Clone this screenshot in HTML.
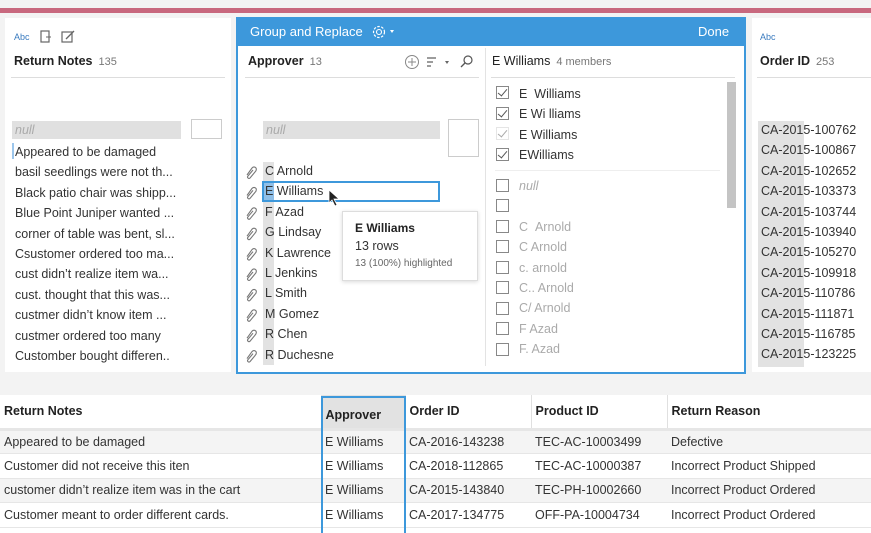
<!DOCTYPE html>
<html><head><style>
*{margin:0;padding:0;box-sizing:border-box}
body{width:871px;height:533px;background:#f3f3f3;font-family:"Liberation Sans",sans-serif;color:#333;position:relative;overflow:hidden;font-size:12.5px}
.a{position:absolute;white-space:nowrap}
.card{position:absolute;background:#fff}
.h{font-weight:bold;font-size:12.5px;color:#222}
.cnt{color:#777;font-weight:normal;font-size:11px;margin-left:6px}
.g{color:#aaa}
.cb{position:absolute;width:13px;height:13px;border:1px solid #888;background:#fff}
.ck::after{content:"";position:absolute;left:3px;top:0px;width:4px;height:8px;border:solid #555;border-width:0 1.3px 1.3px 0;transform:rotate(40deg)}
.hl{background:#e0e0e0}
td{padding:0 4px;height:24.5px;border-bottom:1px solid #e6e6e6;font-size:12.5px;color:#333;white-space:nowrap}
th{padding:0 4px;height:34px;text-align:left;font-size:12.5px;color:#222;border-right:1px solid #e0e0e0;border-bottom:3px solid #e6e6e6}
.pc{display:block;height:20.4px}
</style></head><body>
<div class="a" style="left:0;top:8px;width:871px;height:5px;background:#c8687e"></div>

<!-- left card -->
<div class="card" style="left:5px;top:18px;width:226px;height:354px"></div>
<div class="a" style="left:14px;top:32px;font-size:9px;color:#3a7bbf">Abc</div>
<svg class="a" style="left:40px;top:30px" width="40" height="14"><rect x="1" y="1" width="8" height="11" fill="none" stroke="#666" stroke-width="1.2"/><line x1="6" y1="7" x2="11" y2="7" stroke="#666"/><rect x="22" y="2" width="10" height="10" fill="none" stroke="#666" stroke-width="1.2"/><line x1="26" y1="9" x2="34" y2="1" stroke="#666" stroke-width="1.3"/></svg>
<div class="a h" style="left:14px;top:54px">Return Notes<span class="cnt">135</span></div>
<div class="a" style="left:11px;top:77px;width:214px;height:1px;background:#ddd"></div>
<div class="a hl" style="left:12px;top:121px;width:169px;height:18px"></div>
<div class="a g" style="left:15px;top:123px;font-style:italic">null</div>
<div class="a" style="left:191px;top:119px;width:31px;height:20px;border:1px solid #ccc"></div>
<div class="a" style="left:12px;top:143px;width:2px;height:16px;background:#9cc6ec"></div>
<div class="a" style="left:12px;top:142px;line-height:20.4px">
<div style="padding-left:3px">Appeared to be damaged</div>
<div style="padding-left:3px">basil seedlings were not th...</div>
<div style="padding-left:3px">Black patio chair was shipp...</div>
<div style="padding-left:3px">Blue Point Juniper wanted ...</div>
<div style="padding-left:3px">corner of table was bent, sl...</div>
<div style="padding-left:3px">Csustomer ordered too ma...</div>
<div style="padding-left:3px">cust didn’t realize item wa...</div>
<div style="padding-left:3px">cust. thought that this was...</div>
<div style="padding-left:3px">custmer didn’t know item ...</div>
<div style="padding-left:3px">custmer ordered too many</div>
<div style="padding-left:3px">Customber bought differen..</div>
</div>

<!-- dialog -->
<div class="card" style="left:236px;top:17px;width:510px;height:357px;border:2px solid #3d98db;border-top:none"></div>
<div class="a" style="left:236px;top:17px;width:510px;height:29px;background:#3d98db"></div>
<div class="a" style="left:250px;top:24px;color:#fff;font-size:13px">Group and Replace</div>
<svg class="a" style="left:371px;top:24px" width="28" height="16"><circle cx="8" cy="8" r="5.5" fill="none" stroke="#fff" stroke-width="1.2" stroke-dasharray="2.5 1.5"/><circle cx="8" cy="8" r="2.5" fill="none" stroke="#fff" stroke-width="1.1"/><path d="M19 6l4 0l-2 3z" fill="#fff"/></svg>
<div class="a" style="left:698px;top:24px;color:#fff;font-size:13px">Done</div>
<div class="a" style="left:485px;top:48px;width:1px;height:322px;background:#e3e3e3"></div>

<div class="a h" style="left:248px;top:54px">Approver<span class="cnt">13</span></div>
<svg class="a" style="left:403px;top:54px" width="72" height="16"><circle cx="9" cy="8" r="6.5" fill="none" stroke="#888"/><line x1="9" y1="4" x2="9" y2="12" stroke="#888"/><line x1="5" y1="8" x2="13" y2="8" stroke="#888"/><line x1="24" y1="4" x2="33" y2="4" stroke="#666" stroke-width="1.3"/><line x1="24" y1="8" x2="30" y2="8" stroke="#666" stroke-width="1.3"/><line x1="24" y1="12" x2="28" y2="12" stroke="#666" stroke-width="1.3"/><path d="M42 7l4 0l-2 3z" fill="#666"/><circle cx="65" cy="6" r="4" fill="none" stroke="#555" stroke-width="1.2"/><line x1="62" y1="9" x2="58" y2="13" stroke="#555" stroke-width="1.3"/></svg>
<div class="a" style="left:245px;top:77px;width:234px;height:1px;background:#ddd"></div>
<div class="a hl" style="left:263px;top:121px;width:177px;height:18px"></div>
<div class="a g" style="left:266px;top:123px;font-style:italic">null</div>
<div class="a" style="left:448px;top:119px;width:31px;height:38px;border:1px solid #ccc"></div>

<div class="a" style="left:244px;top:165px">
<svg width="14" height="205"><defs><path id="p" d="M3 10 L8 3 Q10 1 12 3 Q13 5 11 7 L6 13 Q5 14 4 13 Q3 12 4 11 L9 5" fill="none" stroke="#777" stroke-width="1.1"/></defs>
<use href="#p" y="0"/><use href="#p" y="20.4"/><use href="#p" y="40.8"/><use href="#p" y="61.2"/><use href="#p" y="81.6"/><use href="#p" y="102"/><use href="#p" y="122.4"/><use href="#p" y="142.8"/><use href="#p" y="163.2"/><use href="#p" y="183.6"/></svg></div>
<div class="a" style="left:263px;top:162px;width:11px;height:203px;background:#e2e2e2"></div>
<div class="a" style="left:263px;top:182px;width:11px;height:19px;background:#8fbfe8"></div>
<div class="a" style="left:262px;top:181px;width:178px;height:21px;border:2px solid #3d98db"></div>
<div class="a" style="left:265px;top:161px;line-height:20.4px">
<div>C Arnold</div><div>E Williams</div><div>F Azad</div><div>G Lindsay</div><div>K Lawrence</div><div>L Jenkins</div><div>L Smith</div><div>M Gomez</div><div>R Chen</div><div>R Duchesne</div></div>
<svg class="a" style="left:327px;top:189px" width="14" height="18"><path d="M2 1L2 14L5 11L8 17L10 16L7 10L12 10Z" fill="#222" stroke="#fff" stroke-width="0.8"/></svg>

<div class="a" style="left:342px;top:211px;width:136px;height:70px;background:#fff;border:1px solid #ddd;box-shadow:0 1px 4px rgba(0,0,0,.15)"></div>
<div class="a h" style="left:355px;top:221px;font-size:12px">E Williams</div>
<div class="a" style="left:355px;top:239px;font-size:12.5px">13 rows</div>
<div class="a" style="left:355px;top:258px;font-size:10px;color:#666">13 (100%) highlighted</div>

<div class="a h" style="left:492px;top:54px;font-weight:normal;color:#222">E Williams<span class="cnt">4 members</span></div>
<div class="a" style="left:491px;top:77px;width:244px;height:1px;background:#ddd"></div>
<div class="a" style="left:727px;top:82px;width:9px;height:126px;background:#c4c4c4"></div>
<div class="a" style="left:495px;top:170px;width:225px;height:1px;background:#eee"></div>
<div class="cb ck" style="left:496px;top:86px"></div>
<div class="cb ck" style="left:496px;top:107px"></div>
<div class="cb ck" style="left:496px;top:127px;border-color:#ccc;opacity:.5"></div>
<div class="cb ck" style="left:496px;top:148px"></div>
<div class="a" style="left:519px;top:84px;line-height:20.4px"><div>E&nbsp;&nbsp;Williams</div><div>E Wi lliams</div><div>E Williams</div><div>EWilliams</div></div>
<div class="a" style="left:496px;top:179px">
<div class="cb" style="top:0"></div><div class="cb" style="top:20px"></div><div class="cb" style="top:41px"></div><div class="cb" style="top:61px"></div><div class="cb" style="top:82px"></div><div class="cb" style="top:102px"></div><div class="cb" style="top:123px"></div><div class="cb" style="top:143px"></div><div class="cb" style="top:164px"></div></div>
<div class="a g" style="left:519px;top:176px;line-height:20.4px"><div style="font-style:italic">null</div><div>&nbsp;</div><div>C&nbsp;&nbsp;Arnold</div><div>C Arnold</div><div>c. arnold</div><div>C.. Arnold</div><div>C/ Arnold</div><div>F Azad</div><div>F. Azad</div></div>
<div class="a" style="left:238px;top:366px;width:506px;height:6px;background:#fff"></div>

<!-- right card -->
<div class="card" style="left:752px;top:18px;width:119px;height:354px"></div>
<div class="a" style="left:760px;top:32px;font-size:9px;color:#3a7bbf">Abc</div>
<div class="a h" style="left:760px;top:54px">Order ID<span class="cnt">253</span></div>
<div class="a" style="left:757px;top:77px;width:114px;height:1px;background:#ddd"></div>
<div class="a" style="left:758px;top:121px;width:46px;height:246px;background:#e2e2e2"></div>
<div class="a" style="left:761px;top:120px;line-height:20.4px">
<div>CA-2015-100762</div><div>CA-2015-100867</div><div>CA-2015-102652</div><div>CA-2015-103373</div><div>CA-2015-103744</div><div>CA-2015-103940</div><div>CA-2015-105270</div><div>CA-2015-109918</div><div>CA-2015-110786</div><div>CA-2015-111871</div><div>CA-2015-116785</div><div>CA-2015-123225</div></div>

<!-- bottom table -->
<div class="a" style="left:0;top:395px;width:871px;height:138px;background:#fff"></div>
<table class="a" style="left:0;top:395px;border-collapse:collapse;width:871px">
<tr><th style="width:321px">Return Notes</th><th style="width:84px;background:#e2e2e2;padding-top:8px">Approver</th><th style="width:126px">Order ID</th><th style="width:136px">Product ID</th><th style="border-right:none">Return Reason</th></tr>
<tr style="background:#f4f4f4"><td>Appeared to be damaged</td><td>E Williams</td><td>CA-2016-143238</td><td>TEC-AC-10003499</td><td>Defective</td></tr>
<tr><td>Customer did not receive this iten</td><td>E Williams</td><td>CA-2018-112865</td><td>TEC-AC-10000387</td><td>Incorrect Product Shipped</td></tr>
<tr style="background:#f4f4f4"><td>customer didn’t realize item was in the cart</td><td>E Williams</td><td>CA-2015-143840</td><td>TEC-PH-10002660</td><td>Incorrect Product Ordered</td></tr>
<tr><td>Customer meant to order different cards.</td><td>E Williams</td><td>CA-2017-134775</td><td>OFF-PA-10004734</td><td>Incorrect Product Ordered</td></tr>
</table>
<div class="a" style="left:321px;top:396px;width:85px;height:137px;border:2px solid #3d98db;border-bottom:none"></div>
</body></html>
